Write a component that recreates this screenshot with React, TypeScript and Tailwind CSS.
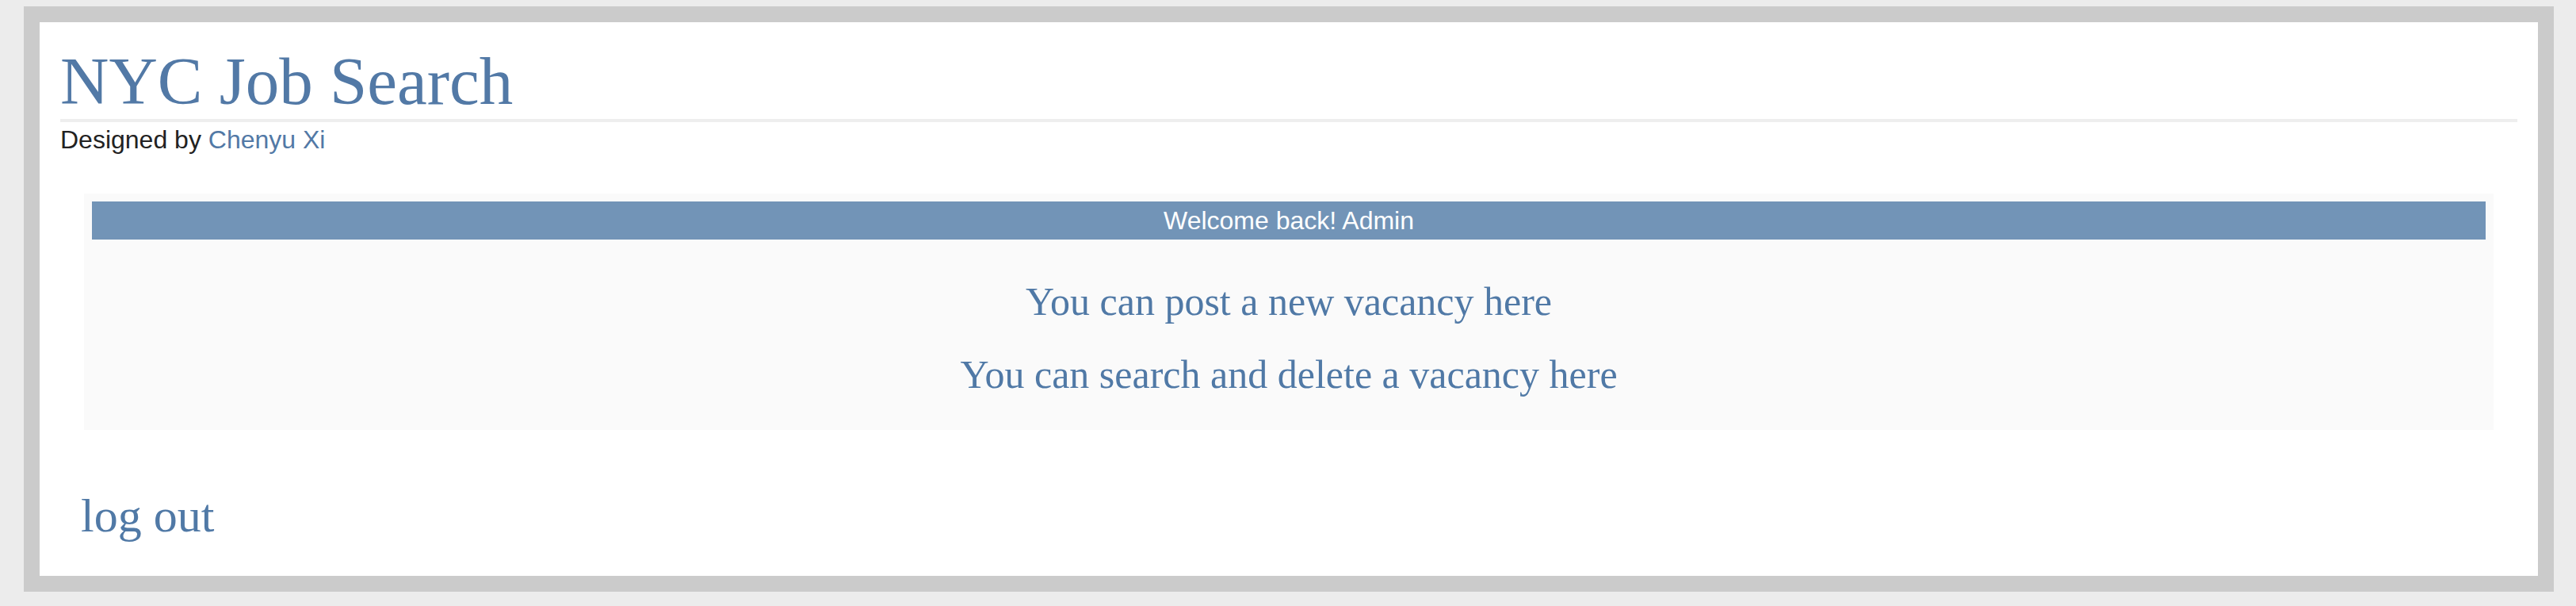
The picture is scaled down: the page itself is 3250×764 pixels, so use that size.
export default function App() {
  return (
    <div className="min-h-[764px] bg-[#ececec] pt-[8px] pl-[30px]">
      <div className="w-[3192px] border-[20px] border-[#cbcbcb] bg-white px-[26px] pt-[32px] pb-[46px]">
        {/* Header */}
        <h1
          className="text-[85px] leading-[84px] text-[#5279a6]"
          style={{ fontFamily: '"Liberation Serif", Georgia, serif' }}
        >
          NYC Job Search
        </h1>
        <div className="mt-[6px] h-[4px] bg-[#eeeeee]" />
        <p
          className="mt-[4px] text-[32px] leading-[36px] text-[#222222]"
          style={{ fontFamily: '"Liberation Sans", Arial, sans-serif' }}
        >
          Designed by <a className="text-[#5279a6]">Chenyu Xi</a>
        </p>

        {/* Admin panel */}
        <div className="mx-[30px] mt-[50px] bg-[#fafafa] p-[10px]">
          <div
            className="h-[48px] bg-[#7294b7] text-center text-[32px] leading-[48px] text-white"
            style={{ fontFamily: '"Liberation Sans", Arial, sans-serif' }}
          >
            Welcome back! Admin
          </div>
          <div
            className="flex flex-col items-center pt-[32px] pb-[14px] text-[50px] leading-[92px] text-[#5079a6]"
            style={{ fontFamily: '"Liberation Serif", "Times New Roman", serif' }}
          >
            <a>You can post a new vacancy here</a>
            <a>You can search and delete a vacancy here</a>
          </div>
        </div>

        <div
          className="mt-[78px] pl-[26px] text-[60px] leading-[60px] text-[#5079a6]"
          style={{ fontFamily: '"Liberation Serif", "Times New Roman", serif' }}
        >
          <a>log out</a>
        </div>
      </div>
    </div>
  );
}
